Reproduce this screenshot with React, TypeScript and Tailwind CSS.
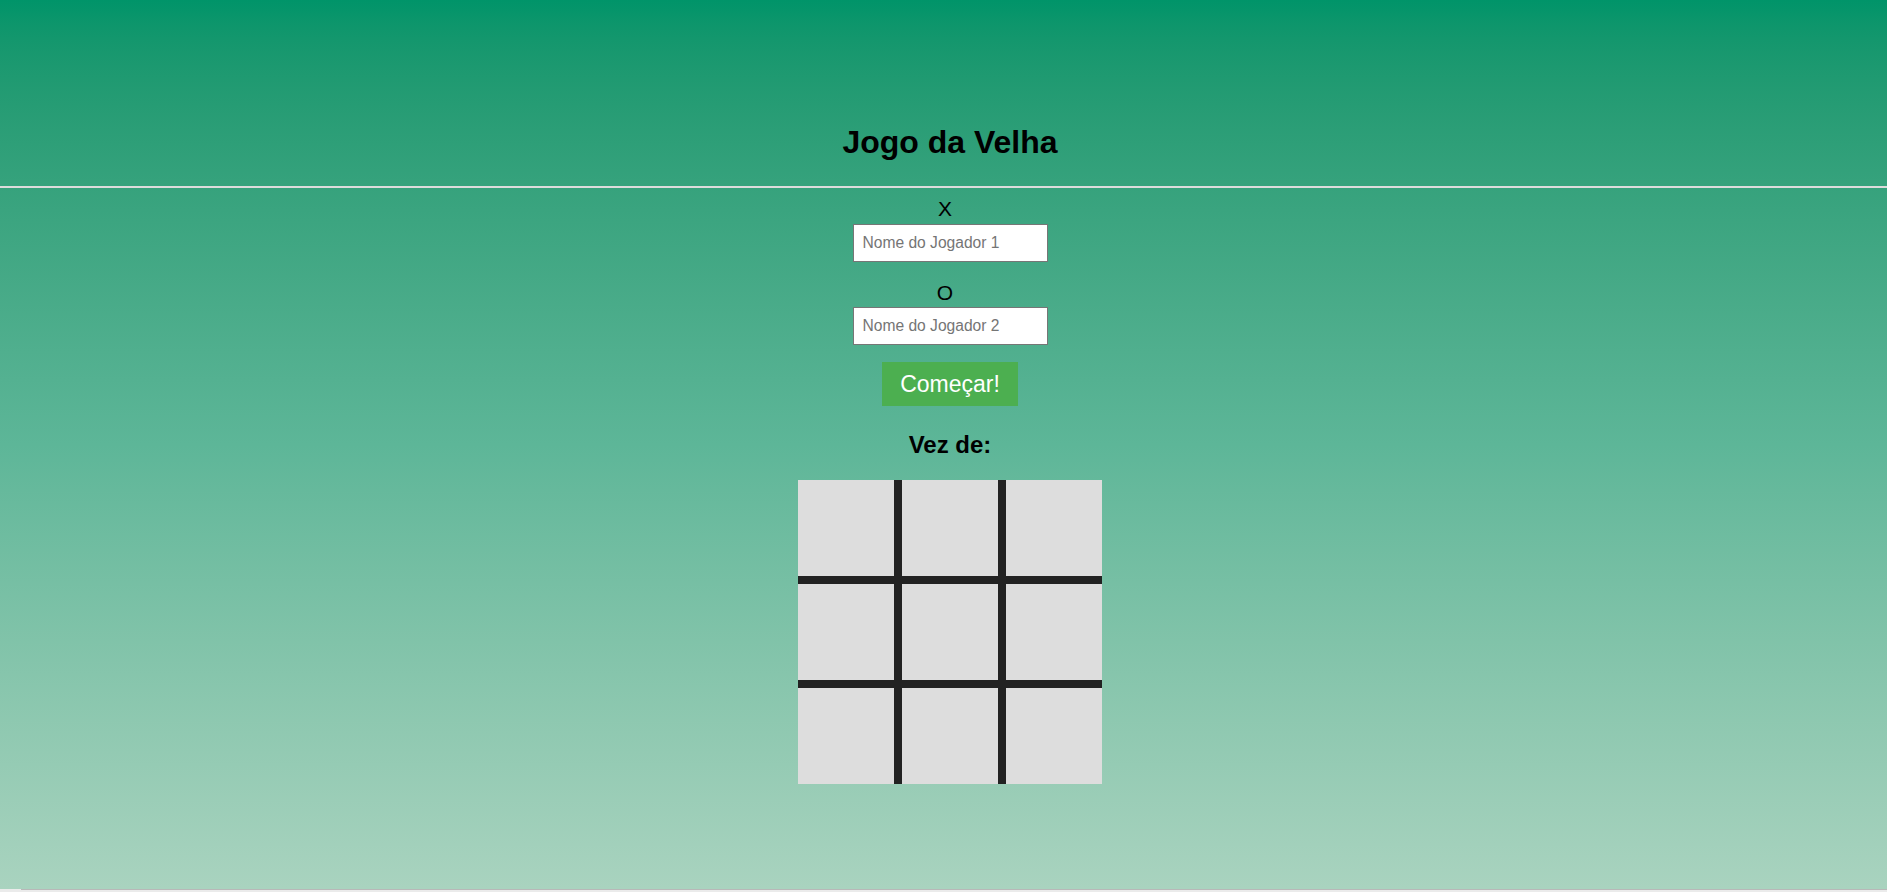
export default function App() {
  const cells = Array.from({ length: 9 });
  return (
    <div className="h-[892px] w-full overflow-hidden font-['Liberation_Sans',Arial,sans-serif] text-black">
      <div className="h-[889px] w-full bg-gradient-to-b from-[#009469] via-[#5db698] to-[#a9d3bf]">
        <header className="pt-[124px] pl-[13px]">
          <h1 className="text-center text-[32px] leading-[37px] font-bold">Jogo da Velha</h1>
        </header>
        <div className="mt-[25px] h-[2px] w-full bg-[#dcdcdc]" />
        <main className="flex flex-col items-center pl-[13px]">
          <div className="mt-[9px] pr-[10px] text-[21px] leading-[23px]">X</div>
          <input
            type="text"
            placeholder="Nome do Jogador 1"
            className="mt-[4px] h-[38px] w-[195px] border border-[#767676] bg-white px-[9px] font-['Liberation_Sans',Arial,sans-serif] text-[15.6px] text-black placeholder:text-[#757575] outline-none"
          />
          <div className="mt-[19px] pr-[10px] text-[21px] leading-[23px]">O</div>
          <input
            type="text"
            placeholder="Nome do Jogador 2"
            className="mt-[3px] h-[38px] w-[195px] border border-[#767676] bg-white px-[9px] font-['Liberation_Sans',Arial,sans-serif] text-[15.6px] text-black placeholder:text-[#757575] outline-none"
          />
          <button className="mt-[17px] flex h-[44px] w-[136px] items-center justify-center bg-[#4caf50] text-[23px] text-white">
            Começar!
          </button>
          <h2 className="mt-[25px] text-[24px] leading-[28px] font-bold">Vez de:</h2>
          <div className="mt-[21px] grid h-[304px] w-[304px] grid-cols-3 gap-[8px] bg-[#222222]">
            {cells.map((_, i) => (
              <div key={i} className="bg-[#dddddd]" />
            ))}
          </div>
        </main>
      </div>
      <div className="h-[3px] w-full bg-[#ebebeb]">
        <div className="ml-[21px] border-t border-[#b8b8b8]" />
      </div>
    </div>
  );
}
